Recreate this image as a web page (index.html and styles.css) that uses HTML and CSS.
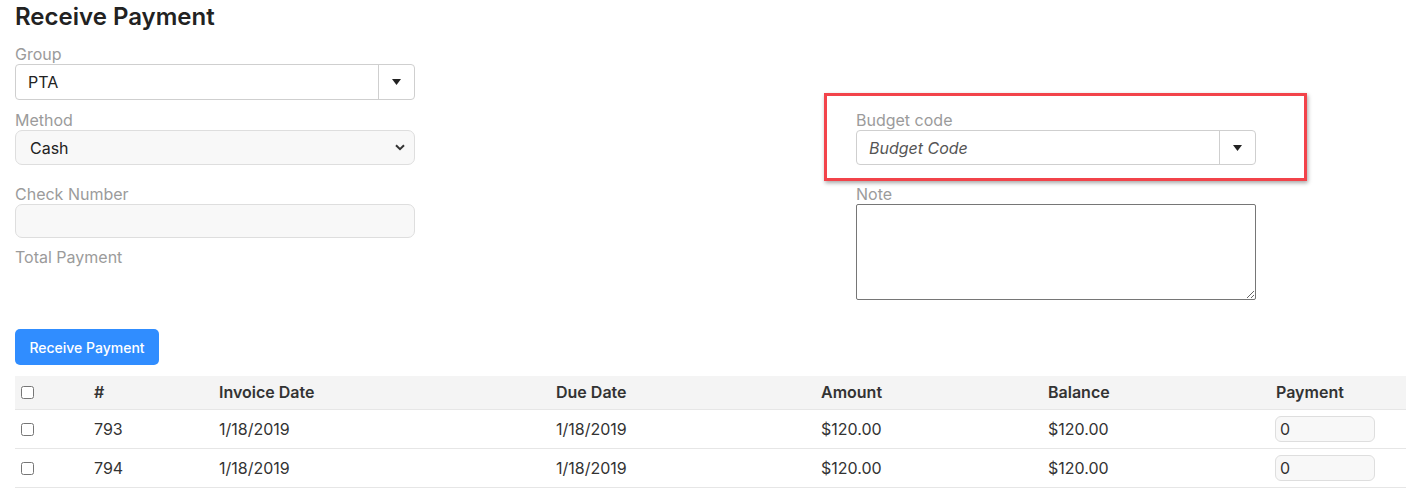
FILE: index.html
```html
<!DOCTYPE html>
<html>
<head>
<meta charset="utf-8">
<link rel="stylesheet" href="styles.css">
</head>
<body>
<div class="page">
  <h1 class="title">Receive Payment</h1>
  <div class="form">
    <div class="col col-left">
      <div class="field f-group">
        <div class="label">Group</div>
        <div class="combo">
          <span class="combo-text">PTA</span>
          <span class="combo-btn"><svg width="9" height="6" viewBox="0 0 9 6"><path d="M0 0H9L4.5 6Z" fill="#222"/></svg></span>
        </div>
      </div>
      <div class="field f-method">
        <div class="label">Method</div>
        <div class="select">
          <span class="select-text">Cash</span>
          <svg class="chev" width="10" height="7" viewBox="0 0 10 7"><path d="M1 1.2L5 5.2L9 1.2" fill="none" stroke="#333" stroke-width="2"/></svg>
        </div>
      </div>
      <div class="field f-check">
        <div class="label">Check Number</div>
        <div class="input"></div>
      </div>
      <div class="field f-total">
        <div class="label">Total Payment</div>
      </div>
    </div>
    <div class="col col-right">
      <div class="highlight"></div>
      <div class="field f-budget">
        <div class="label">Budget code</div>
        <div class="combo combo-b">
          <span class="combo-text placeholder">Budget Code</span>
          <span class="combo-btn"><svg width="9" height="6" viewBox="0 0 9 6"><path d="M0 0H9L4.5 6Z" fill="#222"/></svg></span>
        </div>
      </div>
      <div class="field f-note">
        <div class="label">Note</div>
        <textarea class="note"></textarea>
      </div>
    </div>
  </div>
  <button class="btn">Receive Payment</button>
  <table class="grid">
    <colgroup>
      <col style="width:73px"><col style="width:125px"><col style="width:337px"><col style="width:265px"><col style="width:227px"><col style="width:228px"><col style="width:136px">
    </colgroup>
    <thead>
      <tr><th><input type="checkbox" class="cb"></th><th>#</th><th>Invoice Date</th><th>Due Date</th><th>Amount</th><th>Balance</th><th>Payment</th></tr>
    </thead>
    <tbody>
      <tr><td><input type="checkbox" class="cb"></td><td>793</td><td>1/18/2019</td><td>1/18/2019</td><td>$120.00</td><td>$120.00</td><td><div class="pay">0</div></td></tr>
      <tr><td><input type="checkbox" class="cb"></td><td>794</td><td>1/18/2019</td><td>1/18/2019</td><td>$120.00</td><td>$120.00</td><td><div class="pay">0</div></td></tr>
    </tbody>
  </table>
</div>
</body>
</html>
```

FILE: styles.css
```css
* { box-sizing: border-box; }
html, body { margin: 0; padding: 0; background: #fff; }
body {
  font-family: Inter, "Noto Sans", "Liberation Sans", sans-serif;
  font-size: 16px;
  color: #333;
}
.page { padding: 0 0 0 15px; }
.title {
  margin: 0;
  font-size: 24px;
  font-weight: 600;
  line-height: 34px;
  color: #222;
}
.form {
  display: grid;
  grid-template-columns: 400px 400px;
  column-gap: 441px;
  margin-top: 10px;
}
.col { display: flex; flex-direction: column; }
.col-right { position: relative; padding-top: 66px; }
.label {
  color: #9b9b9b;
  line-height: 20px;
  height: 20px;
}
.f-group { margin-bottom: 10px; }
.f-method { margin-bottom: 19px; }
.f-check { margin-bottom: 9px; }
.f-budget { margin-bottom: 19px; }
.combo {
  display: flex;
  height: 36px;
  border: 1px solid #cfcfcf;
  border-radius: 4px;
  background: #fff;
}
.combo-b { height: 35px; }
.combo-text {
  flex: 1;
  display: flex;
  align-items: center;
  padding-left: 12px;
  color: #222;
}
.combo-text.placeholder { font-style: italic; color: #555; }
.combo-btn {
  width: 36px;
  border-left: 1px solid #cfcfcf;
  display: flex;
  align-items: center;
  justify-content: center;
}
.select {
  display: flex;
  align-items: center;
  height: 35px;
  border: 1px solid #dedede;
  border-radius: 7px;
  background: #f8f8f8;
  padding: 0 9px 0 14px;
}
.select-text { flex: 1; color: #222; }
.input {
  height: 34px;
  border: 1px solid #dedede;
  border-radius: 7px;
  background: #f8f8f8;
}
.note {
  display: block;
  width: 400px;
  height: 96px;
  border: 1px solid #767676;
  border-radius: 2px;
  margin: 0;
  font-family: inherit;
}
.highlight {
  position: absolute;
  left: -32px;
  top: 49px;
  width: 483px;
  height: 88px;
  border: 3px solid #f2434a;
  box-shadow: 1px 2px 4px rgba(0,0,0,0.35);
  pointer-events: none;
}
.btn {
  display: block;
  margin-top: 29px;
  width: 144px;
  height: 36px;
  border: 0;
  border-radius: 5px;
  background: #308dff;
  color: #fff;
  font-family: inherit;
  font-size: 14px;
  font-weight: 500;
  padding: 0;
}
.grid {
  margin-top: 11px;
  width: 1391px;
  table-layout: fixed;
  border-collapse: collapse;
}
.grid th {
  background: #f4f4f4;
  height: 33px;
  text-align: left;
  font-weight: 600;
  color: #333;
  padding: 0 0 0 6px;
  border-bottom: 1px solid #e6e6e6;
}
.grid td {
  height: 39px;
  padding: 0 0 0 6px;
  border-bottom: 1px solid #e6e6e6;
  color: #333;
}
.cb {
  margin: 0;
  width: 13px;
  height: 13px;
  vertical-align: middle;
  position: relative;
  top: -1px;
}
.pay {
  width: 100px;
  height: 26px;
  border: 1px solid #dedede;
  border-radius: 6px;
  background: #f8f8f8;
  line-height: 24px;
  padding-left: 4px;
  color: #333;
  margin-left: -1px;
}
```
